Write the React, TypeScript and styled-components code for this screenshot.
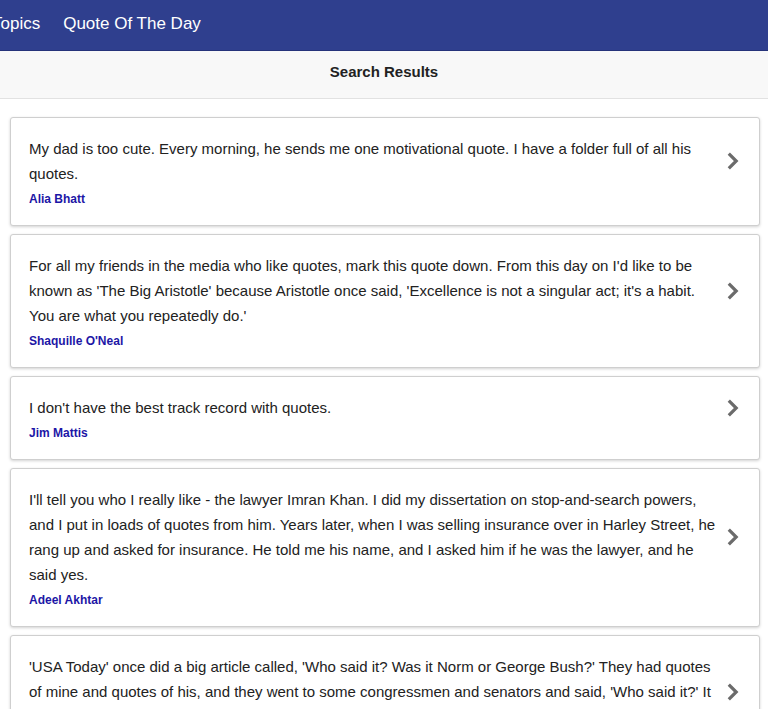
import React from 'react'
import styled, { createGlobalStyle } from 'styled-components'

interface Quote {
    id: number;
    text: string;
    author: string;
}

const quotes: Quote[] = [
    {
        id: 1,
        text: 'My dad is too cute. Every morning, he sends me one motivational quote. I have a folder full of all his quotes.',
        author: 'Alia Bhatt',
    },
    {
        id: 2,
        text: "For all my friends in the media who like quotes, mark this quote down. From this day on I'd like to be known as 'The Big Aristotle' because Aristotle once said, 'Excellence is not a singular act; it's a habit. You are what you repeatedly do.'",
        author: "Shaquille O'Neal",
    },
    {
        id: 3,
        text: "I don't have the best track record with quotes.",
        author: 'Jim Mattis',
    },
    {
        id: 4,
        text: "I'll tell you who I really like - the lawyer Imran Khan. I did my dissertation on stop-and-search powers, and I put in loads of quotes from him. Years later, when I was selling insurance over in Harley Street, he rang up and asked for insurance. He told me his name, and I asked him if he was the lawyer, and he said yes.",
        author: 'Adeel Akhtar',
    },
    {
        id: 5,
        text: "'USA Today' once did a big article called, 'Who said it? Was it Norm or George Bush?' They had quotes of mine and quotes of his, and they went to some congressmen and senators and said, 'Who said it?' It was hysterical.",
        author: 'Norm Macdonald',
    },
]

const GlobalStyle = createGlobalStyle`
    html, body {
        margin: 0;
        padding: 0;
        background: #ffffff;
        font-family: "Liberation Sans", Arial, sans-serif;
        color: #222222;
    }
    * {
        box-sizing: border-box;
    }
`

const Page = styled.div`
    width: 768px;
    height: 709px;
    overflow: hidden;
`

const NavBar = styled.nav`
    height: 51px;
    background: #2f3f8e;
    border-bottom: 1px solid #26337a;
    overflow: hidden;
    display: flex;
    align-items: center;
`

const NavList = styled.ul`
    list-style: none;
    margin: 0 0 0 -8px;
    padding: 0;
    display: flex;
    align-items: center;
    column-gap: 23px;
`

const NavItem = styled.li`
    color: #ffffff;
    font-size: 17px;
    line-height: 22px;
    white-space: nowrap;
    margin-top: -2px;
`

const SubHeader = styled.header`
    height: 48px;
    padding-top: 12px;
    background: #f8f8f8;
    border-bottom: 1px solid #e2e2e2;
    display: flex;
    justify-content: center;
`

const SubTitle = styled.h1`
    margin: 0;
    font-size: 15px;
    line-height: 17px;
    font-weight: bold;
    color: #222222;
`

const List = styled.main`
    padding: 18px 8px 0 10px;
    display: flex;
    flex-direction: column;
    row-gap: 8px;
`

const Card = styled.article`
    background: #ffffff;
    border: 1px solid #cfcfcf;
    border-radius: 3px;
    box-shadow: 0 1px 3px rgba(0, 0, 0, 0.18);
    padding: 18px 20px 18px 18px;
    cursor: pointer;
`

const CardRow = styled.div`
    display: flex;
    align-items: center;
    column-gap: 9px;
`

const QuoteText = styled.p`
    flex: 1;
    margin: 0;
    font-size: 15px;
    line-height: 25px;
    color: #222222;
`

const Chevron = styled.svg`
    flex: none;
    width: 12px;
    height: 18px;
`

const Author = styled.div`
    margin-top: 5px;
    font-size: 12px;
    line-height: 16px;
    font-weight: bold;
    color: #1c16a6;
`

function QuoteCard({ text, author }: Quote) {
    return (
        <Card>
            <CardRow>
                <QuoteText>{text}</QuoteText>
                <Chevron viewBox="0 0 12 18">
                    <polyline
                        points="1.8,1.6 9.2,9 1.8,16.4"
                        fill="none"
                        stroke="#6b6b6b"
                        strokeWidth="3.2"
                    />
                </Chevron>
            </CardRow>
            <Author>{author}</Author>
        </Card>
    )
}

function App() {
    return (
        <Page>
            <GlobalStyle />
            <NavBar>
                <NavList>
                    <NavItem>Topics</NavItem>
                    <NavItem>Quote Of The Day</NavItem>
                </NavList>
            </NavBar>
            <SubHeader>
                <SubTitle>Search Results</SubTitle>
            </SubHeader>
            <List>
                {quotes.map(q => (
                    <QuoteCard key={q.id} {...q} />
                ))}
            </List>
        </Page>
    )
}

export default App
